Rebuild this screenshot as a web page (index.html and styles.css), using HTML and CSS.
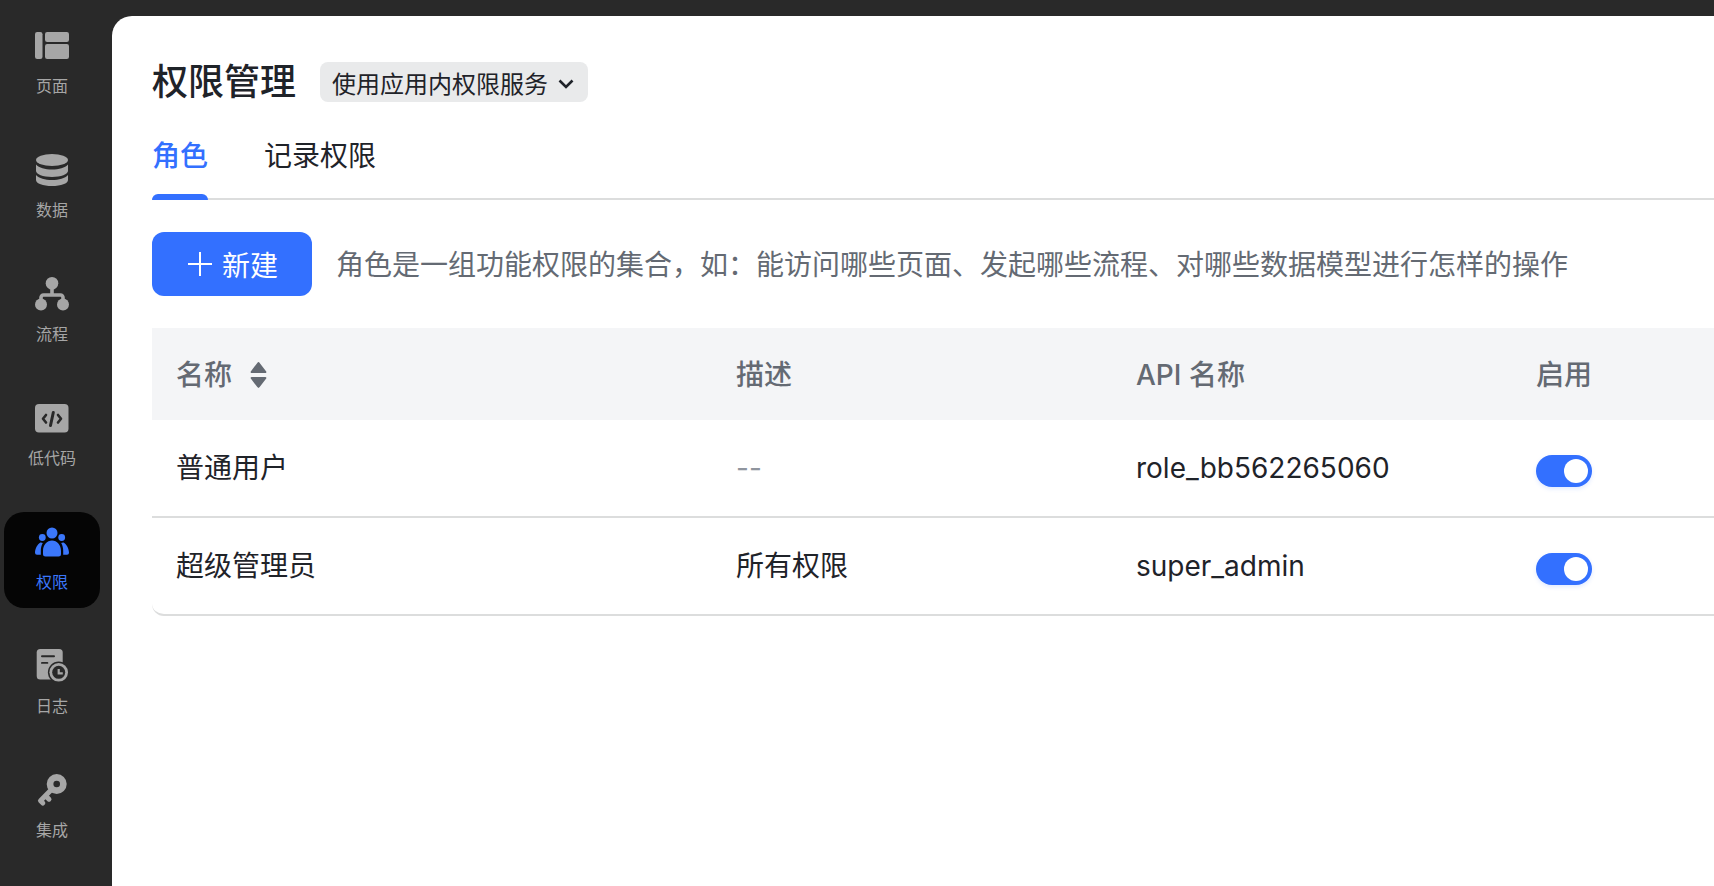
FILE: index.html
```html
<!DOCTYPE html>
<html lang="zh-CN">
<head>
<meta charset="utf-8">
<title>权限管理</title>
<link rel="stylesheet" href="styles.css">
</head>
<body>
<div class="app">
  <nav class="sidebar">
    <a class="nav-item">
      <svg class="nav-icon" viewBox="0 0 34 34"><rect x="0" y="3" width="7.5" height="27" rx="2.2"/><rect x="10" y="3" width="24" height="10" rx="2.2"/><rect x="10" y="15" width="24" height="15" rx="2.2"/></svg>
      <span class="nav-label">页面</span>
    </a>
    <a class="nav-item">
      <svg class="nav-icon" viewBox="0 0 34 34"><ellipse cx="17" cy="7" rx="16" ry="6"/><path d="M1 11.5C4 15 10 16.500 17 16.500S30 15 33 11.500V18C33 21 26 24 17 24S1 21 1 18Z"/><path d="M1 22C4 25.500 10 27 17 27S30 25.500 33 22V27C33 30.500 26 33 17 33S1 30.500 1 27Z"/></svg>
      <span class="nav-label">数据</span>
    </a>
    <a class="nav-item">
      <svg class="nav-icon" viewBox="0 0 34 34"><circle cx="17" cy="6.300" r="6.300"/><circle cx="6" cy="27.500" r="6"/><circle cx="28" cy="27.500" r="6"/><path class="nav-line" d="M17 12V18M6 24V20.500A2.500 2.500 0 0 1 8.500 18H25.500A2.500 2.500 0 0 1 28 20.500V24"/></svg>
      <span class="nav-label">流程</span>
    </a>
    <a class="nav-item">
      <svg class="nav-icon" viewBox="0 0 34 34"><rect x="0" y="3" width="33.500" height="28.500" rx="4"/><path class="nav-cut" d="M11 14L8 17.800L11 21.500M23 14L26 17.800L23 21.500"/><path class="nav-slash" d="M18.300 11.500L15.500 24.500"/></svg>
      <span class="nav-label">低代码</span>
    </a>
    <a class="nav-item active">
      <svg class="nav-icon" viewBox="0 0 34 34"><circle cx="17" cy="8" r="5.500"/><circle cx="7.300" cy="12.500" r="3.400"/><circle cx="26.700" cy="12.500" r="3.400"/><path d="M17 15.500C22 15.500 26 20 26 26V29A2.500 2.500 0 0 1 23.500 31.500H10.500A2.500 2.500 0 0 1 8 29V26C8 20 12 15.500 17 15.500Z"/><path d="M5.500 17.500C2.300 19.500 0 23.500 0 27.800A2 2 0 0 0 2 29.800H5.800V26C5.800 22.800 6.500 20.300 7.800 18C7 17.600 6.300 17.400 5.500 17.500Z"/><path d="M28.500 17.500C31.700 19.500 34 23.500 34 27.800A2 2 0 0 1 32 29.800H28.200V26C28.200 22.800 27.500 20.300 26.200 18C27 17.600 27.700 17.400 28.500 17.500Z"/></svg>
      <span class="nav-label">权限</span>
    </a>
    <a class="nav-item">
      <svg class="nav-icon" viewBox="0 0 34 34"><rect x="1.700" y="0" width="26" height="30.500" rx="3.500"/><rect class="nav-dark" x="6" y="6.300" width="14" height="2" rx="1"/><rect class="nav-dark" x="6" y="13" width="7.300" height="1.800" rx=".9"/><circle class="nav-dark" cx="23.700" cy="23.300" r="10.800"/><circle cx="23.700" cy="23.300" r="9.300"/><circle class="nav-dark" cx="23.700" cy="23.300" r="6.500"/><path class="nav-hand" d="M23.700 20V24.300H27.800"/></svg>
      <span class="nav-label">日志</span>
    </a>
    <a class="nav-item">
      <svg class="nav-icon" viewBox="0 0 34 34"><circle cx="21.700" cy="11" r="10"/><path class="nav-key" d="M17 16L5.500 27.800M10.500 22.700L14 26.200M5.500 27.800L7.800 30"/><circle class="nav-dark" cx="21.700" cy="11" r="3.300"/></svg>
      <span class="nav-label">集成</span>
    </a>
  </nav>
  <main class="main">
    <header class="title-row">
      <h1 class="title">权限管理</h1>
      <button class="scope">使用应用内权限服务<svg class="chevron" viewBox="0 0 16 10"><path d="M1.500 1.500L8 8L14.500 1.500"/></svg></button>
    </header>
    <div class="tabs">
      <span class="tab active">角色</span>
      <span class="tab">记录权限</span>
    </div>
    <div class="toolbar">
      <button class="primary"><svg class="plus" viewBox="0 0 24 24"><path d="M12 0V24M0 12H24"/></svg>新建</button>
      <p class="hint">角色是一组功能权限的集合&#xFF0C;如&#xFF1A;能访问哪些页面、发起哪些流程、对哪些数据模型进行怎样的操作</p>
    </div>
    <div class="table">
      <div class="row head">
        <div class="cell">名称<svg class="sort" viewBox="0 0 17 26"><path d="M7.300 .9a1.500 1.500 0 0 1 2.400 0l6.500 8.500a1 1 0 0 1-.8 1.600H1.600a1 1 0 0 1-.8-1.600Z"/><path d="M7.300 25.100a1.500 1.500 0 0 0 2.400 0l6.500-8.500a1 1 0 0 0-.8-1.600H1.600a1 1 0 0 0-.8 1.600Z"/></svg></div>
        <div class="cell">描述</div>
        <div class="cell">API 名称</div>
        <div class="cell">启用</div>
      </div>
      <div class="row">
        <div class="cell">普通用户</div>
        <div class="cell muted">--</div>
        <div class="cell">role_bb562265060</div>
        <div class="cell"><span class="switch"></span></div>
      </div>
      <div class="row">
        <div class="cell">超级管理员</div>
        <div class="cell">所有权限</div>
        <div class="cell">super_admin</div>
        <div class="cell"><span class="switch"></span></div>
      </div>
    </div>
  </main>
</div>
</body>
</html>
```
FILE: styles.css
```css
* { box-sizing: border-box; }
html, body { margin: 0; height: 100%; overflow: hidden; }
body {
  background: #292929;
  font-family: Inter, "Noto Sans CJK SC", sans-serif;
  color: #1f2329;
}
.app { display: flex; height: 886px; }

.sidebar {
  width: 112px;
  flex: none;
  padding: 16px 12px 0 4px;
  display: flex;
  flex-direction: column;
  gap: 28px;
}
.nav-item {
  height: 96px;
  flex: none;
  padding-top: 13px;
  border-radius: 20px;
  display: flex;
  flex-direction: column;
  align-items: center;
  color: #a6a6a6;
}
.nav-item.active { background: #050505; color: #3b77fb; }
.nav-icon { width: 34px; height: 34px; fill: currentColor; flex: none; }
.nav-line { fill: none; stroke: currentColor; stroke-width: 3.600; }
.nav-cut { fill: none; stroke: #292929; stroke-width: 2.600; stroke-linecap: round; stroke-linejoin: round; }
.nav-slash { fill: none; stroke: #292929; stroke-width: 3; stroke-linecap: round; }
.nav-dark { fill: #292929; }
.nav-hand { fill: none; stroke: currentColor; stroke-width: 2.200; }
.nav-key { fill: none; stroke: currentColor; stroke-width: 5; stroke-linecap: round; stroke-linejoin: round; }
.nav-label { margin-top: 11px; font-size: 16px; line-height: 24px; }

.main {
  flex: 1;
  margin-top: 16px;
  padding: 44px 0 0 40px;
  background: #fff;
  border-top-left-radius: 20px;
  min-width: 0;
}
.title-row { display: flex; align-items: center; gap: 24px; height: 44px; }
.title { margin: 0; font-size: 36px; line-height: 44px; font-weight: 500; }
.scope {
  height: 40px;
  padding: 0 14px 0 12px;
  display: flex;
  align-items: center;
  border: 0;
  border-radius: 8px;
  background: #e9eaeb;
  color: #1f2329;
  font: inherit;
  font-size: 24px;
}
.chevron { width: 16px; height: 10px; margin: 4px 0 0 10px; fill: none; stroke: currentColor; stroke-width: 2.600; }

.tabs {
  display: flex;
  gap: 56px;
  padding-top: 32px;
  height: 96px;
  border-bottom: 2px solid #dcdddd;
}
.tab { position: relative; font-size: 28px; line-height: 40px; }
.tab.active { color: #3370ff; font-weight: 500; }
.tab.active::after {
  content: "";
  position: absolute;
  left: 0;
  right: 0;
  top: 58px;
  height: 6px;
  background: #3370ff;
  border-radius: 6px 6px 0 0;
}

.toolbar { display: flex; align-items: center; gap: 24px; margin-top: 32px; }
.primary {
  width: 160px;
  height: 64px;
  flex: none;
  padding: 0 0 0 36px;
  display: flex;
  align-items: center;
  gap: 10px;
  border: 0;
  border-radius: 12px;
  background: #3370ff;
  color: #fff;
  font: inherit;
  font-size: 28px;
}
.plus { width: 24px; height: 24px; fill: none; stroke: currentColor; stroke-width: 2; }
.hint { margin: 0; padding-top: 2px; font-size: 28px; line-height: 40px; color: #646a73; white-space: nowrap; }

.table { margin-top: 32px; }
.row {
  display: grid;
  grid-template-columns: 560px 400px 400px 1fr;
  align-items: center;
  height: 98px;
  border-bottom: 2px solid #dcdddd;
  font-size: 28px;
  line-height: 40px;
}
.row:last-child { border-bottom-left-radius: 12px; }
.row.head {
  height: 92px;
  padding-top: 2px;
  background: #f4f5f7;
  border-bottom: 0;
  color: #646a73;
  font-weight: 450;
}
.cell { padding-left: 24px; display: flex; align-items: center; white-space: nowrap; }
.muted { color: #8f959e; }
.sort { width: 17px; height: 26px; margin-left: 18px; fill: #646a73; }
.switch {
  position: relative;
  width: 56px;
  height: 32px;
  margin-top: 6px;
  border-radius: 16px;
  background: #3370ff;
  box-shadow: 0 2px 4px rgba(51, 112, 255, .15);
}
.switch::after {
  content: "";
  position: absolute;
  top: 4px;
  right: 4px;
  width: 24px;
  height: 24px;
  border-radius: 50%;
  background: #fff;
}
```
